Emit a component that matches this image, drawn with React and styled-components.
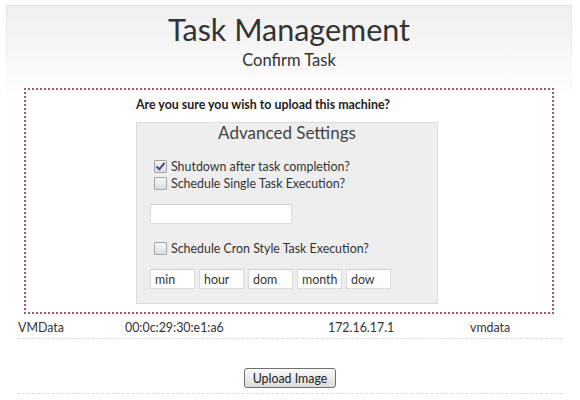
import React from "react";
import styled, { createGlobalStyle } from "styled-components";

const GlobalStyle = createGlobalStyle`
  body {
    margin: 0;
    background: #fff;
    font-family: Lato, "Liberation Sans", sans-serif;
    color: #333;
  }
`;

const Page = styled.div`
  padding: 5px 8px 0 6px;
`;

const Frame = styled.div`
  border: 1px solid;
  border-image: linear-gradient(to bottom, #e2e2e2, rgba(255, 255, 255, 0) 95px) 1;
  border-bottom: none;
  background: linear-gradient(to bottom, #efefef 0, #ffffff 95px) no-repeat;
  padding-top: 5px;
`;

const Title = styled.h1`
  margin: 0;
  text-align: center;
  font-weight: 400;
  font-size: 30.5px;
  line-height: 36px;
  color: #333;
`;

const Subtitle = styled.h2`
  margin: 2px 0 0;
  text-align: center;
  font-weight: 400;
  font-size: 16.5px;
  line-height: 22px;
  color: #333;
`;

const Confirm = styled.div`
  margin: 17px 17px 0;
  border: 2px dotted #9e5b66;
  padding: 7px 0 8px;
`;

const Inner = styled.div`
  width: 306px;
  margin: 0 auto;
`;

const Question = styled.p`
  margin: 0 0 9px;
  font-size: 12.4px;
  font-weight: 700;
  line-height: 16px;
  color: #222;
`;

const Panel = styled.fieldset`
  margin: 0;
  width: 302px;
  box-sizing: border-box;
  border: 1px solid #dcdcdc;
  background: #eeeeee;
  padding: 0 13px 14px;
`;

const PanelTitle = styled.div`
  text-align: center;
  font-size: 17px;
  line-height: 20px;
  color: #444;
  margin: 0 0 15px;
`;

const CheckRow = styled.label`
  display: flex;
  align-items: center;
  font-size: 12.4px;
  line-height: 17px;
  color: #333;
`;

const Check = styled.input.attrs({ type: "checkbox" })`
  appearance: none;
  position: relative;
  box-sizing: border-box;
  width: 13px;
  height: 13px;
  margin: 0 4px 0 4px;
  border: 1px solid #a4a4a4;
  border-radius: 1px;
  background: linear-gradient(to bottom, #f6f6f6, #dedede);

  &:checked::after {
    content: "";
    position: absolute;
    left: 3px;
    top: 0px;
    width: 3px;
    height: 7px;
    border: solid #3f4f8f;
    border-width: 0 2px 2px 0;
    transform: rotate(40deg);
  }
`;

const TextBox = styled.input`
  display: block;
  box-sizing: border-box;
  width: ${p => p.w}px;
  height: 20px;
  margin: 0;
  padding: 0 4px;
  border: 1px solid #dadada;
  border-top-color: #cfcfcf;
  background: #fff;
  font-family: inherit;
  font-size: 12.4px;
  color: #333;
  outline: none;
`;

const Gap = styled.div`
  height: ${p => p.h}px;
`;

const CronRow = styled.div`
  display: flex;
  gap: 4px;
`;

const DataRow = styled.div`
  margin: 5px 8px 0 10px;
  display: grid;
  grid-template-columns: 107px 203px 142px auto;
  padding: 1px 0 2px 1px;
  border-bottom: 1px dashed #dcdcdc;
  font-size: 12.4px;
  line-height: 16px;
  color: #333;
`;

const ButtonRow = styled.div`
  margin: 0 8px 0 10px;
  padding: 29px 0 5px;
  display: flex;
  justify-content: center;
  border-bottom: 1px dashed #dcdcdc;
`;

const Button = styled.button`
  width: 92px;
  height: 20px;
  padding: 0;
  border: 1px solid #6f6f6f;
  border-radius: 3px;
  background: linear-gradient(to bottom, #fbfbfb, #dcdcdc);
  font-family: inherit;
  font-size: 12.4px;
  color: #222;
`;

export default function App() {
  return (
    <>
      <GlobalStyle />
      <Page>
        <Frame>
          <Title>Task Management</Title>
          <Subtitle>Confirm Task</Subtitle>
          <Confirm>
            <Inner>
              <Question>Are you sure you wish to upload this machine?</Question>
              <Panel>
                <PanelTitle>Advanced Settings</PanelTitle>
                <CheckRow>
                  <Check defaultChecked />
                  Shutdown after task completion?
                </CheckRow>
                <CheckRow>
                  <Check />
                  Schedule Single Task Execution?
                </CheckRow>
                <Gap h={12} />
                <TextBox w={142} />
                <Gap h={16} />
                <CheckRow>
                  <Check />
                  Schedule Cron Style Task Execution?
                </CheckRow>
                <Gap h={12} />
                <CronRow>
                  <TextBox w={45} defaultValue="min" />
                  <TextBox w={45} defaultValue="hour" />
                  <TextBox w={45} defaultValue="dom" />
                  <TextBox w={45} defaultValue="month" />
                  <TextBox w={45} defaultValue="dow" />
                </CronRow>
              </Panel>
            </Inner>
          </Confirm>
          <DataRow>
            <span>VMData</span>
            <span>00:0c:29:30:e1:a6</span>
            <span>172.16.17.1</span>
            <span>vmdata</span>
          </DataRow>
          <ButtonRow>
            <Button>Upload Image</Button>
          </ButtonRow>
        </Frame>
      </Page>
    </>
  );
}
